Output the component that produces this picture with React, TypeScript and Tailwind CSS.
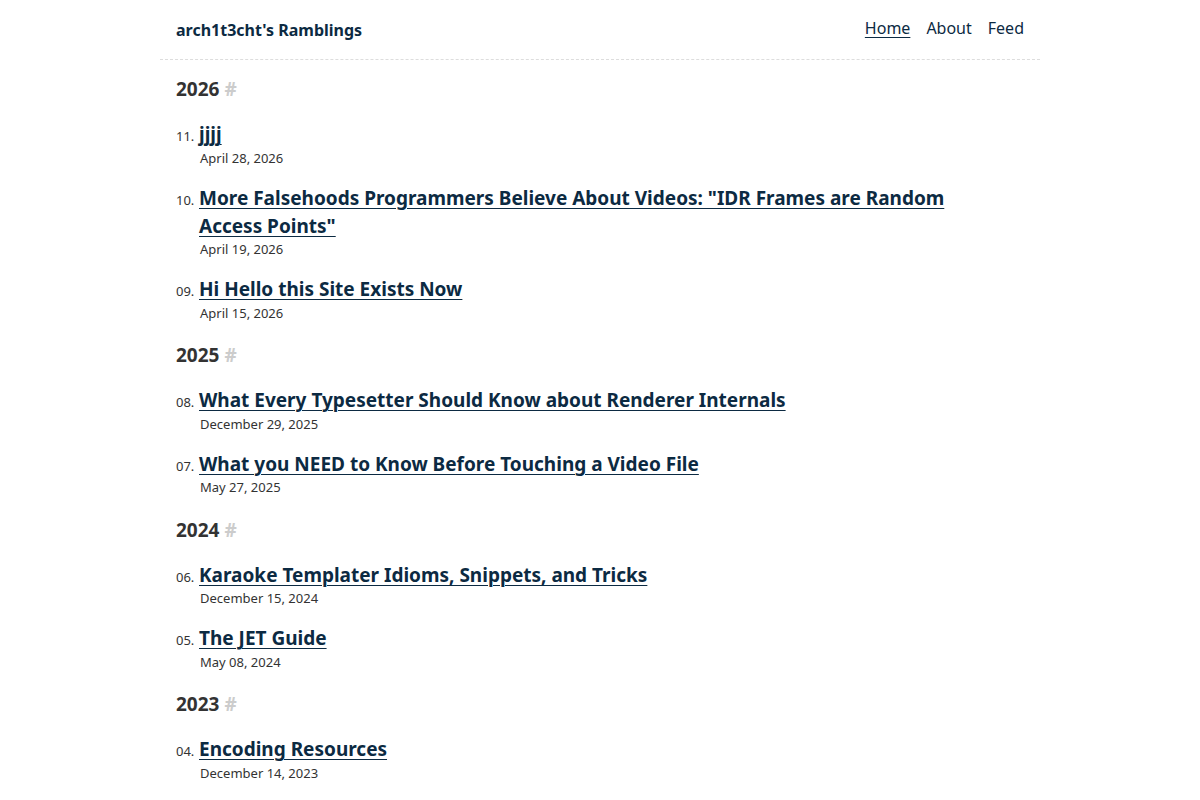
import React from 'react';

interface Post {
  num: string;
  title: string;
  date: string;
}

interface YearGroup {
  year: string;
  posts: Post[];
}

const groups: YearGroup[] = [
  {
    year: '2026',
    posts: [
      { num: '11.', title: 'jjjj', date: 'April 28, 2026' },
      {
        num: '10.',
        title: 'More Falsehoods Programmers Believe About Videos: "IDR Frames are Random Access Points"',
        date: 'April 19, 2026',
      },
      { num: '09.', title: 'Hi Hello this Site Exists Now', date: 'April 15, 2026' },
    ],
  },
  {
    year: '2025',
    posts: [
      { num: '08.', title: 'What Every Typesetter Should Know about Renderer Internals', date: 'December 29, 2025' },
      { num: '07.', title: 'What you NEED to Know Before Touching a Video File', date: 'May 27, 2025' },
    ],
  },
  {
    year: '2024',
    posts: [
      { num: '06.', title: 'Karaoke Templater Idioms, Snippets, and Tricks', date: 'December 15, 2024' },
      { num: '05.', title: 'The JET Guide', date: 'May 08, 2024' },
    ],
  },
  {
    year: '2023',
    posts: [{ num: '04.', title: 'Encoding Resources', date: 'December 14, 2023' }],
  },
];

function PostItem({ post }: { post: Post }) {
  return (
    <li className="mt-[17px] flex items-baseline">
      <span className="w-[23px] shrink-0 text-[13px] leading-[18px] text-[#333]">{post.num}</span>
      <div className="max-w-[790px]">
        <div className="text-[19px] font-bold leading-7">
          <a href="#" className="text-[#0c2a42] underline decoration-1 underline-offset-[3px]">
            {post.title}
          </a>
        </div>
        <div className="mt-[0.5px] pl-px text-[13px] leading-[18px] text-[#333]">{post.date}</div>
      </div>
    </li>
  );
}

export default function App() {
  return (
    <div className="min-h-screen bg-white font-['Noto_Sans',sans-serif] text-[#333]">
      <div className="mx-auto w-[880px]">
        <header className="flex items-center justify-between border-b border-dashed border-[#ddd] px-4 pb-[17px] pt-[14px]">
          <a href="#" className="pt-[4px] text-[16px] font-bold leading-6 text-[#0c2a42]">
            arch1t3cht's Ramblings
          </a>
          <nav className="flex gap-4 text-[16px] leading-6 text-[#0c2a42]">
            <a href="#" className="underline underline-offset-[3px]">Home</a>
            <a href="#">About</a>
            <a href="#">Feed</a>
          </nav>
        </header>
        <main className="px-4 pb-8">
          {groups.map((g, i) => (
            <section key={g.year}>
              <h2 className={`${i === 0 ? 'mt-[15px]' : 'mt-[19.5px]'} text-[19px] font-bold leading-7 text-[#333]`}>
                {g.year} <span className="text-[#ccc]">#</span>
              </h2>
              <ol>
                {g.posts.map((p) => (
                  <PostItem key={p.num} post={p} />
                ))}
              </ol>
            </section>
          ))}
        </main>
      </div>
    </div>
  );
}
